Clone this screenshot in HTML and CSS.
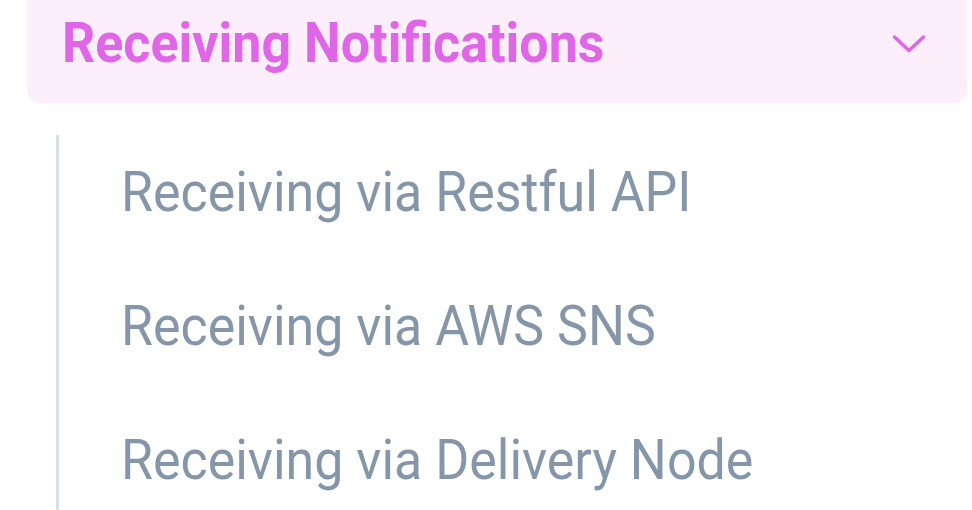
FILE: index.html
```html
<!DOCTYPE html>
<html lang="en">
<head>
    <meta charset="UTF-8">
    <title>Receiving Notifications</title>
    <link rel="stylesheet" href="styles.css">
</head>
<body>
    <nav class="sidebar">
        <div class="group-head">
            <span class="group-title">Receiving Notifications</span>
            <svg class="chevron" width="34" height="20" viewBox="0 0 34 20">
                <path d="M2.5 3 L17 16.5 L31.5 3" fill="none" stroke="#df66e6" stroke-width="3.5" stroke-linecap="round" stroke-linejoin="round"/>
            </svg>
        </div>
        <ul class="group-items">
            <li><a href="#">Receiving via Restful API</a></li>
            <li><a href="#">Receiving via AWS SNS</a></li>
            <li><a href="#">Receiving via Delivery Node</a></li>
        </ul>
    </nav>
</body>
</html>
```

FILE: styles.css
```css
body {
    margin: 0;
    background-color: #ffffff;
    font-family: Roboto, "Liberation Sans", sans-serif;
    overflow: hidden;
}
.sidebar {
    margin-top: -17px;
    padding: 0 5px 0 27px;
}
.group-head {
    display: flex;
    align-items: center;
    justify-content: space-between;
    height: 120px;
    padding: 0 41px 0 35px;
    background-color: #fdeefc;
    border-radius: 14px;
}
.group-title {
    font-size: 56px;
    font-weight: 700;
    color: #df66e6;
    transform: scaleX(0.928);
    transform-origin: left center;
}
.chevron {
    display: block;
    margin-top: 2px;
}
.group-items {
    list-style: none;
    margin: 32px 0 0 29px;
    padding: 0 0 0 62px;
    border-left: 3px solid #d8e0e8;
}
.group-items li {
    box-sizing: border-box;
    height: 134px;
    padding-bottom: 20px;
    display: flex;
    align-items: center;
}
.group-items a {
    font-size: 56px;
    color: #8596a9;
    text-decoration: none;
    transform: scaleX(0.927);
    transform-origin: left center;
}
```
